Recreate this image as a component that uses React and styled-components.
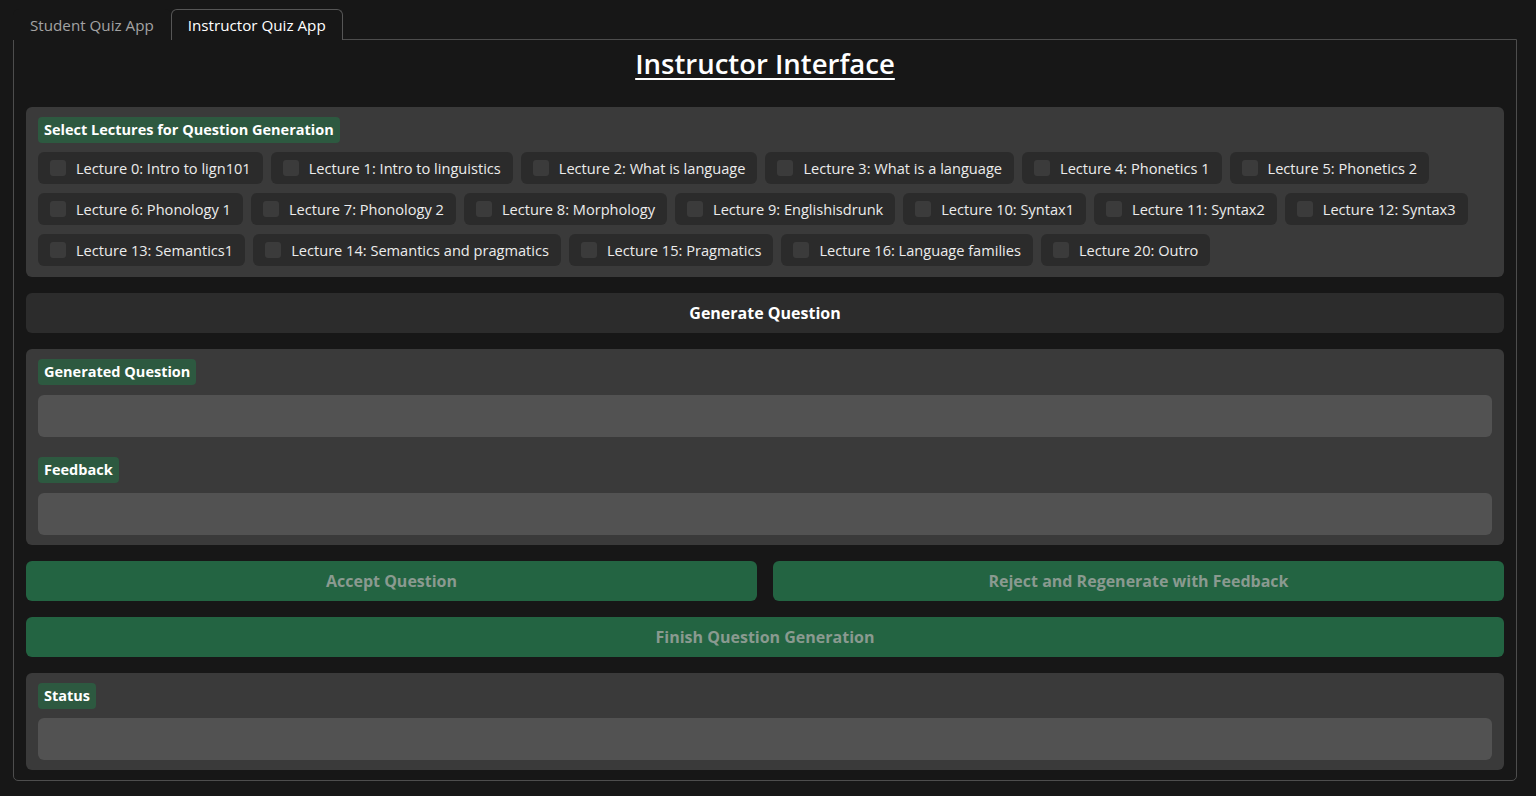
import styled, { createGlobalStyle } from "styled-components";

const GlobalStyle = createGlobalStyle`
  html, body {
    margin: 0;
    padding: 0;
    background: #171717;
  }
  body {
    font-family: "Open Sans", "Noto Sans", sans-serif;
    color: #f2f2f2;
  }
  * {
    box-sizing: border-box;
  }
`;

const Page = styled.div`
  padding: 8px 19px 16px 13px;
`;

const TabBar = styled.div`
  display: flex;
  align-items: flex-end;
  height: 31px;
`;

const Tab = styled.div`
  height: 31px;
  padding: 0 16px;
  display: flex;
  align-items: center;
  font-size: 15.2px;
  color: ${(p) => (p.$active ? "#ffffff" : "#a3a3a3")};
  border: 1px solid ${(p) => (p.$active ? "#565656" : "transparent")};
  border-bottom: none;
  border-radius: 6px 6px 0 0;
  background: #171717;
  margin-bottom: -1px;
  position: relative;
  z-index: 1;
`;

const Panel = styled.div`
  border: 1px solid #4d4d4d;
  border-radius: 0 0 5px 5px;
  padding: 7px 12px 10px 12px;
  display: flex;
  flex-direction: column;
  gap: 16px;
`;

const Title = styled.h1`
  margin: 0 0 10px 0;
  text-align: center;
  font-size: 27.5px;
  font-weight: 600;
  color: #ffffff;
  text-decoration: underline;
  text-underline-offset: 4px;
  text-decoration-thickness: 2px;
  line-height: 34px;
`;

const Block = styled.div`
  background: #3a3a3a;
  border-radius: 6px;
  padding: 10px 12px ${(p) => p.$bottom || 10}px;
  display: flex;
  flex-direction: column;
  gap: ${(p) => p.$gap || 9}px;
`;

const Field = styled.div`
  display: flex;
  flex-direction: column;
  gap: 10px;
`;

const Label = styled.span`
  align-self: flex-start;
  background: #2d5940;
  color: #ffffff;
  font-weight: 700;
  font-size: 14.5px;
  line-height: 26px;
  padding: 0 6px;
  border-radius: 4px;
`;

const ChipWrap = styled.div`
  display: flex;
  flex-wrap: wrap;
  gap: 9px 8px;
`;

const Chip = styled.label`
  display: flex;
  align-items: center;
  gap: 8px;
  height: 32px;
  padding: 0 12px;
  background: #2b2b2b;
  border-radius: 6px;
  font-size: 14.6px;
  color: #ececec;
`;

const Box = styled.span`
  width: 16px;
  height: 16px;
  border-radius: 3px;
  background: #3b3b3b;
  margin-right: 2px;
`;

const Textbox = styled.div`
  height: 42px;
  background: #525252;
  border-radius: 6px;
`;

const Button = styled.button`
  height: 40px;
  width: 100%;
  border: none;
  border-radius: 6px;
  font-family: inherit;
  font-weight: 700;
  font-size: 16px;
  background: ${(p) => (p.$green ? "#236442" : "#2c2c2c")};
  color: ${(p) => (p.$green ? "#8a9a90" : "#ffffff")};
`;

const ButtonRow = styled.div`
  display: grid;
  grid-template-columns: 1fr 1fr;
  gap: 16px;
`;

const lectures = [
  "Lecture 0: Intro to lign101",
  "Lecture 1: Intro to linguistics",
  "Lecture 2: What is language",
  "Lecture 3: What is a language",
  "Lecture 4: Phonetics 1",
  "Lecture 5: Phonetics 2",
  "Lecture 6: Phonology 1",
  "Lecture 7: Phonology 2",
  "Lecture 8: Morphology",
  "Lecture 9: Englishisdrunk",
  "Lecture 10: Syntax1",
  "Lecture 11: Syntax2",
  "Lecture 12: Syntax3",
  "Lecture 13: Semantics1",
  "Lecture 14: Semantics and pragmatics",
  "Lecture 15: Pragmatics",
  "Lecture 16: Language families",
  "Lecture 20: Outro",
];

const App = () => {
  return (
    <Page>
      <GlobalStyle />
      <TabBar>
        <Tab>Student Quiz App</Tab>
        <Tab $active>Instructor Quiz App</Tab>
      </TabBar>

      <Panel>
        <Title>Instructor Interface</Title>

        {/* lecture picker */}
        <Block $bottom={11}>
          <Label>Select Lectures for Question Generation</Label>
          <ChipWrap>
            {lectures.map((l) => (
              <Chip key={l}>
                <Box />
                {l}
              </Chip>
            ))}
          </ChipWrap>
        </Block>

        <Button>Generate Question</Button>

        <Block $gap={20}>
          <Field>
            <Label>Generated Question</Label>
            <Textbox />
          </Field>
          <Field>
            <Label>Feedback</Label>
            <Textbox />
          </Field>
        </Block>

        <ButtonRow>
          <Button $green>Accept Question</Button>
          <Button $green>Reject and Regenerate with Feedback</Button>
        </ButtonRow>
        <Button $green>Finish Question Generation</Button>

        <Block $gap={9}>
          <Label>Status</Label>
          <Textbox />
        </Block>
      </Panel>
    </Page>
  );
};

export default App;
